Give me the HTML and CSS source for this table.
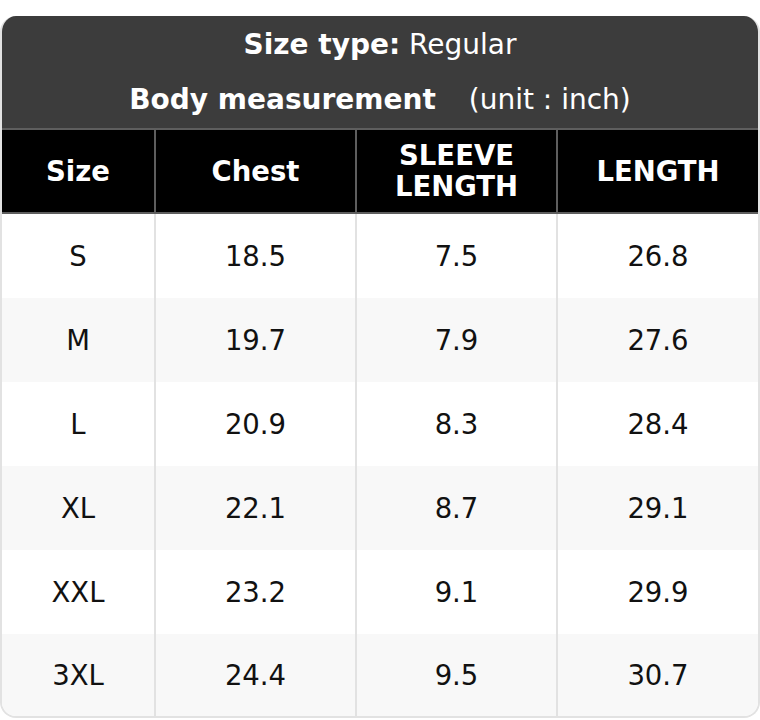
FILE: index.html
```html
<!DOCTYPE html>
<html>
<head>
<meta charset="utf-8">
<link rel="stylesheet" href="styles.css">
</head>
<body>
<div class="chart">
  <div class="caption">
    <div class="cap-line"><b>Size type:</b> Regular</div>
    <div class="cap-line cap-second"><b>Body measurement</b><span class="unit">(unit : inch)</span></div>
  </div>
  <table class="sizes">
    <colgroup>
      <col class="c1"><col class="c2"><col class="c3"><col class="c4">
    </colgroup>
    <thead>
      <tr><th>Size</th><th>Chest</th><th>SLEEVE<br>LENGTH</th><th>LENGTH</th></tr>
    </thead>
    <tbody>
      <tr><td>S</td><td>18.5</td><td>7.5</td><td>26.8</td></tr>
      <tr><td>M</td><td>19.7</td><td>7.9</td><td>27.6</td></tr>
      <tr><td>L</td><td>20.9</td><td>8.3</td><td>28.4</td></tr>
      <tr><td>XL</td><td>22.1</td><td>8.7</td><td>29.1</td></tr>
      <tr><td>XXL</td><td>23.2</td><td>9.1</td><td>29.9</td></tr>
      <tr class="last"><td>3XL</td><td>24.4</td><td>9.5</td><td>30.7</td></tr>
    </tbody>
  </table>
</div>
</body>
</html>
```

FILE: styles.css
```css
html, body {
  margin: 0;
  padding: 0;
  background: #ffffff;
}
body {
  padding-top: 16px;
  font-family: "DejaVu Sans", "Liberation Sans", sans-serif;
  font-size: 27.5px;
  color: #111111;
}
.chart {
  width: 760px;
  box-sizing: border-box;
  border: 2px solid #e2e2e2;
  border-top: none;
  border-radius: 16px;
  overflow: hidden;
}
.caption {
  background: #3c3c3c;
  color: #ffffff;
  text-align: center;
  font-size: 28px;
  padding: 11px 0 10px;
  height: 112px;
  box-sizing: border-box;
}
.cap-line {
  line-height: 36px;
  height: 36px;
}
.cap-second {
  margin-top: 19px;
}
.unit {
  margin-left: 33px;
}
.sizes {
  width: 100%;
  border-collapse: collapse;
  table-layout: fixed;
}
.c1 { width: 153px; }
.c2 { width: 201px; }
.c3 { width: 201px; }
.c4 { width: 201px; }
.sizes th {
  background: #000000;
  color: #ffffff;
  font-weight: bold;
  height: 82px;
  line-height: 31px;
  padding: 0;
  border: 2px solid #5e5e5e;
  text-align: center;
}
.sizes th:first-child { border-left: none; }
.sizes th:last-child { border-right: none; }
.sizes td {
  height: 84px;
  padding: 0;
  text-align: center;
  border-left: 2px solid #e2e2e2;
  background: #ffffff;
}
.sizes .last td {
  height: 82px;
}
.sizes td:first-child { border-left: none; }
.sizes tbody tr:nth-child(even) td {
  background: #f8f8f8;
}
```
